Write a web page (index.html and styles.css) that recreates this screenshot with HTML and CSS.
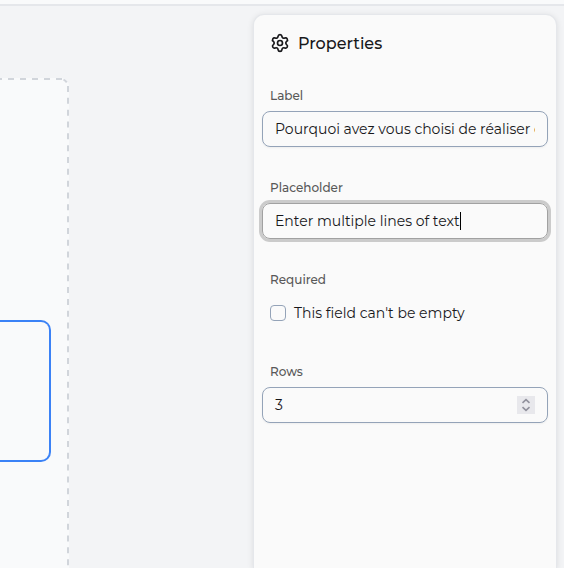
FILE: index.html
```html
<!DOCTYPE html>
<html lang="en">
<head>
<meta charset="utf-8">
<title>Form builder</title>
<link rel="stylesheet" href="styles.css">
</head>
<body>
<header class="topbar"></header>
<main class="workspace">
  <section class="stage">
    <div class="canvas">
      <svg class="dashes" viewBox="0 0 69 490" fill="none" stroke="#d1d5db" stroke-width="2">
        <path d="M-4 1H62" stroke-dasharray="6 6"/>
        <path d="M63.5 1.6Q65.5 2.4 66.8 4.4"/>
        <path d="M68 8V490" stroke-dasharray="6 5.83"/>
      </svg>
      <div class="selected-field"></div>
    </div>
  </section>
  <aside class="panel">
    <h2 class="panel-title">
      <svg class="gear" viewBox="0 0 24 24" fill="none" stroke="currentColor" stroke-width="2" stroke-linecap="round" stroke-linejoin="round"><path d="M9.671 4.136a2.34 2.34 0 0 1 4.659 0 2.34 2.34 0 0 0 3.319 1.915 2.34 2.34 0 0 1 2.33 4.033 2.34 2.34 0 0 0 0 3.831 2.34 2.34 0 0 1-2.33 4.033 2.34 2.34 0 0 0-3.319 1.915 2.34 2.34 0 0 1-4.659 0 2.34 2.34 0 0 0-3.32-1.915 2.34 2.34 0 0 1-2.33-4.033 2.34 2.34 0 0 0 0-3.831A2.34 2.34 0 0 1 6.35 6.051a2.34 2.34 0 0 0 3.319-1.915"/><circle cx="12" cy="12" r="3"/></svg>
      <span>Properties</span>
    </h2>
    <div class="field">
      <div class="label">Label</div>
      <div class="input"><span class="value">Pourquoi avez vous choisi de réaliser cette</span></div>
    </div>
    <div class="field">
      <div class="label">Placeholder</div>
      <div class="input focused"><span>Enter multiple lines of text</span><i class="caret"></i></div>
    </div>
    <div class="field">
      <div class="label">Required</div>
      <div class="check"><span class="box"></span><span>This field can't be empty</span></div>
    </div>
    <div class="field">
      <div class="label">Rows</div>
      <div class="input number"><span>3</span>
        <svg class="stepper" viewBox="0 0 18 18" fill="none" stroke="#91919c" stroke-width="1.6"><path d="M5.5 6.8 9 3.6l3.5 3.2M5.5 11.2 9 14.4l3.5-3.2"/></svg>
      </div>
    </div>
  </aside>
</main>
</body>
</html>
```
FILE: styles.css
```css
* { box-sizing: border-box; }
body { margin: 0; height: 568px; overflow: hidden; display: flex; flex-direction: column; background: #f3f4f6; color: #18181b; font-family: Montserrat, Inter, sans-serif; font-size: 14px; }
.topbar { flex: none; height: 6px; background: #f9fafb; border-bottom: 2px solid #e5e7eb; }
.workspace { flex: 1; min-height: 0; display: flex; justify-content: space-between; }
.stage { width: 69px; padding-top: 72px; }
.canvas { position: relative; height: 490px; padding: 242px 18px 0 0; border-top-right-radius: 8px; background: #f9fafb; }
.dashes { position: absolute; top: 0; right: 0; width: 69px; height: 490px; }
.selected-field { height: 142px; border: 2px solid #3b82f6; border-left: 0; border-radius: 0 10px 10px 0; }
.panel { width: 302px; margin: 9px 8px 0 0; padding: 0 8px; background: #fafafa; border-radius: 10px 10px 0 0; box-shadow: 0 0 0 1px #e5e7eb, 0 1px 6px 1px rgba(0,0,0,.1); }
.panel-title { display: flex; align-items: center; gap: 8px; height: 40px; margin: 8px 0 24px; padding-left: 8px; font-size: 16px; font-weight: 500; }
.gear { width: 20px; height: 20px; }
.field { height: 92px; }
.label { height: 24px; padding-left: 8px; line-height: 18px; font-size: 12px; font-weight: 500; color: #585858; }
.input { display: flex; align-items: center; height: 36px; padding: 0 12px; border: 1px solid #94a3b8; border-radius: 8px; white-space: nowrap; box-shadow: 0 1px 2px rgba(0,0,0,.05); }
.value { overflow: hidden; }
.focused { border-color: #a1a1a1; box-shadow: 0 0 0 3px #cbcbcb; }
.caret { width: 1px; height: 18px; background: #000; }
.check { display: flex; align-items: center; gap: 8px; height: 36px; padding-left: 8px; white-space: nowrap; }
.box { width: 16px; height: 16px; border: 1px solid #94a3b8; border-radius: 4px; }
.number { justify-content: space-between; }
.stepper { width: 18px; height: 18px; background: #e8e8ec; }
```
